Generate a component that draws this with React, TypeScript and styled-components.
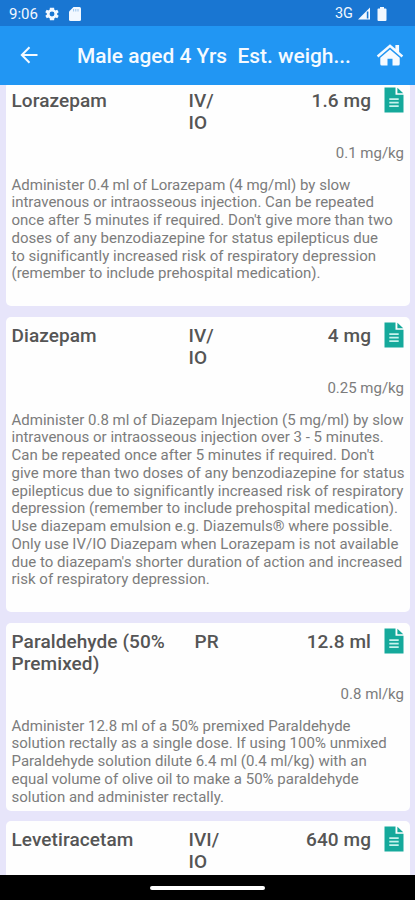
import React from "react";
import styled, { createGlobalStyle } from "styled-components";

const GlobalStyle = createGlobalStyle`
  *, *::before, *::after { box-sizing: border-box; }
  body { margin: 0; background: #e7e5fa; font-family: Roboto, "Liberation Sans", sans-serif; }
`;

const Screen = styled.div`
  width: 415px;
  height: 900px;
  display: flex;
  flex-direction: column;
  overflow: hidden;
  background: #e7e5fa;
`;

const StatusBar = styled.header`
  flex: none;
  height: 26px;
  padding: 1px 28px 0 9px;
  display: flex;
  align-items: center;
  background: #1976d2;
  color: #f2f8ff;
  font-size: 14.5px;
`;

const Clock = styled.span`
  width: 36px;
  font-size: 15px;
  white-space: nowrap;
`;

const StatusIcons = styled.div`
  display: flex;
  align-items: center;
  flex: 1;
  gap: 10px;
`;

const Network = styled.span`
  font-size: 14.5px;
  margin-right: 4px;
`;

const StatusGroup = styled.div`
  display: flex;
  align-items: center;
`;

const Battery = styled.svg`
  margin-left: 6px;
`;

const AppBar = styled.nav`
  flex: none;
  height: 59px;
  padding: 0 11px 2px 17px;
  display: flex;
  align-items: center;
  background: #2196f3;
  color: #f5faff;
`;

const IconButton = styled.button`
  border: 0;
  padding: 0;
  background: none;
  color: inherit;
  display: flex;
`;

const Title = styled.h1`
  flex: 1;
  margin: 3px 0 0 36px;
  font-size: 20.9px;
  line-height: 28px;
  font-weight: 500;
  white-space: pre;
`;

const DrugList = styled.main`
  flex: 1;
  min-height: 0;
  overflow: hidden;
  padding: 0 5px 0 6px;
`;

const Scrolled = styled.div`
  display: flex;
  flex-direction: column;
  gap: 10.5px;
  margin-top: -3.5px;
`;

const Card = styled.article<{ $height: number }>`
  height: ${(p) => p.$height}px;
  padding: 5px 6px 0 5.5px;
  border-radius: 5px;
  background: #fefefe;
`;

const CardHeader = styled.div`
  height: 56px;
  display: grid;
  grid-template-columns: 177px 60px 122.5px 1fr;
  align-items: start;
  color: #555;
  font-size: 19px;
  line-height: 22px;
  font-weight: 500;
  letter-spacing: 0.08px;
  white-space: pre;
`;

const DrugName = styled.h2`
  margin: 3px 0 0;
  font: inherit;
`;

const Route = styled.span<{ $indent?: number }>`
  margin: 3px 0 0 ${(p) => p.$indent ?? 0}px;
`;

const Dose = styled.strong`
  margin-top: 3px;
  font: inherit;
  text-align: right;
`;

const DocIcon = styled.svg`
  justify-self: end;
`;

const Rate = styled.div`
  height: 34px;
  line-height: 20px;
  text-align: right;
  color: #7c7c7c;
  font-size: 15px;
`;

const Advice = styled.p`
  margin: 0;
  color: #7c7c7c;
  font-size: 15px;
  line-height: 17.75px;
  letter-spacing: 0.01px;
  white-space: pre;
`;

const NavBar = styled.footer`
  flex: none;
  height: 25px;
  display: flex;
  justify-content: center;
  align-items: center;
  background: #000;
`;

const HomePill = styled.div`
  width: 115px;
  height: 4px;
  border-radius: 2px;
  background: #fff;
`;

function DocumentGlyph() {
  return (
    <DocIcon width="20" height="26" viewBox="0 0 20 26">
      <path d="M.5.5h11v7.300h8V25.500H.5z" fill="#15a99b" />
      <path d="M13.400.8 19.300 6.300H13.400z" fill="#15a99b" />
      <path d="M5.300 12.200h9.400M5.300 15.700h9.400M5.300 19.200h9.400" stroke="#c6f3ed" strokeWidth="1.700" />
    </DocIcon>
  );
}

type Drug = {
  name: string;
  route: string;
  indent?: number;
  dose: string;
  rate: string;
  height: number;
  advice: string;
};

const drugs: Drug[] = [
  {
    name: "Lorazepam", route: "IV/\nIO", dose: "1.6 mg", rate: "0.1 mg/kg", height: 224.5,
    advice: `Administer 0.4 ml of Lorazepam (4 mg/ml) by slow
intravenous or intraosseous injection. Can be repeated
once after 5 minutes if required. Don't give more than two
doses of any benzodiazepine for status epilepticus due
to significantly increased risk of respiratory depression
(remember to include prehospital medication).`,
  },
  {
    name: "Diazepam", route: "IV/\nIO", dose: "4 mg", rate: "0.25 mg/kg", height: 295.5,
    advice: `Administer 0.8 ml of Diazepam Injection (5 mg/ml) by slow
intravenous or intraosseous injection over 3 - 5 minutes.
Can be repeated once after 5 minutes if required. Don't
give more than two doses of any benzodiazepine for status
epilepticus due to significantly increased risk of respiratory
depression (remember to include prehospital medication).
Use diazepam emulsion e.g. Diazemuls® where possible.
Only use IV/IO Diazepam when Lorazepam is not available
due to diazepam's shorter duration of action and increased
risk of respiratory depression.`,
  },
  {
    name: "Paraldehyde (50%\nPremixed)", route: "PR", indent: 6, dose: "12.8 ml", rate: "0.8 ml/kg", height: 188,
    advice: `Administer 12.8 ml of a 50% premixed Paraldehyde
solution rectally as a single dose. If using 100% unmixed
Paraldehyde solution dilute 6.4 ml (0.4 ml/kg) with an
equal volume of olive oil to make a 50% paraldehyde
solution and administer rectally.`,
  },
  { name: "Levetiracetam", route: "IVI/\nIO", dose: "640 mg", rate: "", height: 64, advice: "" },
];

export default function App() {
  return (
    <>
      <GlobalStyle />
      <Screen>
        <StatusBar>
          <Clock>9:06</Clock>
          <StatusIcons>
            <svg width="14" height="14" viewBox="2 2 20 20" fill="currentColor">
              <path d="M19.4 13a7.8 7.8 0 0 0 0-2l2.1-1.6-2-3.5-2.5 1a7 7 0 0 0-1.7-1L15 3h-6l-.4 2.9a7 7 0 0 0-1.7 1l-2.500-1-2 3.500L4.600 11a7.800 7.800 0 0 0 0 2l-2.100 1.600 2 3.500 2.500-1a7 7 0 0 0 1.700 1L9 21h6l.4-2.900a7 7 0 0 0 1.700-1l2.500 1 2-3.500zM12 15.500a3.500 3.500 0 1 1 0-7 3.500 3.500 0 0 1 0 7z" />
            </svg>
            <svg width="12" height="14" viewBox="0 0 12 14">
              <path d="M4.500 0H10.500Q12 0 12 1.500v11q0 1.500-1.500 1.500h-9Q0 14 0 12.500V4.500z" fill="currentColor" />
              <path d="M4.600 2v2.500M6.800 2v2.500M9 2v2.500" stroke="#8dbbe9" strokeWidth=".9" />
            </svg>
          </StatusIcons>
          <StatusGroup>
            <Network>3G</Network>
            <svg width="14" height="13" viewBox="0 0 14 13">
              <path d="M1 12.500 13 .5v12z" fill="currentColor" />
              <path d="M10.600 4.500v7" stroke="#1976d2" strokeWidth="1.600" />
            </svg>
            <Battery width="10" height="14" viewBox="0 0 10 14">
              <path d="M3 0h4v1.500h1.500q1 0 1 1V13q0 1-1 1h-7q-1 0-1-1V2.500q0-1 1-1H3z" fill="currentColor" />
            </Battery>
          </StatusGroup>
        </StatusBar>
        <AppBar>
          <IconButton aria-label="Back">
            <svg width="24" height="24" viewBox="0 0 24 24" fill="none" stroke="currentColor" strokeWidth="2">
              <path d="M20.500 12H5M12.500 4.200 4.800 12l7.700 7.800" />
            </svg>
          </IconButton>
          <Title>{"Male aged 4 Yrs  Est. weigh..."}</Title>
          <IconButton aria-label="Home">
            <svg width="28" height="24" viewBox="0 0 28 24" fill="currentColor">
              <path d="M14 1.200.8 12.500l1.600 1.900L14 4.600l11.600 9.800 1.600-1.900-4.100-3.600V2h-3.700v3.800z" />
              <path d="M14 6.600 4.300 14.700V21q0 1.500 1.500 1.500h5.700v-6.700h5v6.700h5.700q1.500 0 1.500-1.500v-6.300z" />
            </svg>
          </IconButton>
        </AppBar>
        <DrugList>
          <Scrolled>
            {drugs.map((d) => (
              <Card key={d.name} $height={d.height}>
                <CardHeader>
                  <DrugName>{d.name}</DrugName>
                  <Route $indent={d.indent}>{d.route}</Route>
                  <Dose>{d.dose}</Dose>
                  <DocumentGlyph />
                </CardHeader>
                {d.rate && <Rate>{d.rate}</Rate>}
                {d.advice && <Advice>{d.advice}</Advice>}
              </Card>
            ))}
          </Scrolled>
        </DrugList>
        <NavBar>
          <HomePill />
        </NavBar>
      </Screen>
    </>
  );
}
